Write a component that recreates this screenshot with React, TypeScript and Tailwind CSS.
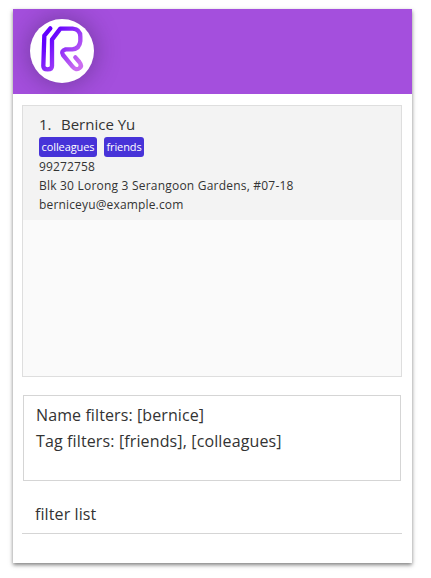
function Logo() {
  return (
    <div className="h-16 w-16 rounded-full bg-white shadow-[0_0_24px_2px_rgba(50,30,80,0.4)]">
      <svg viewBox="0 0 192 192" className="h-16 w-16" fill="none">
        <defs>
          <linearGradient id="ink" gradientUnits="userSpaceOnUse" x1="55" y1="60" x2="150" y2="130">
            <stop offset="0" stopColor="#6200ff" />
            <stop offset="1" stopColor="#cb6cf0" />
          </linearGradient>
        </defs>
        <path
          d="M61 28L43 50L40 141Q40 151 53 151Q66 151 66 141V62L91 29H128Q151 31 151 53V66Q149 89 127 91H107Q91 96 99 108L127 142Q139 156 149 147Q157 140 148 129L136 115"
          stroke="url(#ink)"
          strokeWidth="13"
          strokeLinecap="round"
          strokeLinejoin="round"
        />
      </svg>
    </div>
  );
}

function Tag({ label, className }: { label: string; className: string }) {
  return (
    <span className={`flex h-5 items-center justify-center rounded-[3px] bg-[#4733d8] pb-px text-[11px] tracking-[-0.1px] whitespace-nowrap text-white ${className}`}>
      {label}
    </span>
  );
}

export default function App() {
  return (
    <div className="h-[578px] w-[431px] bg-white pt-[9px] pl-[13px] font-['Open_Sans','Noto_Sans',sans-serif] text-[#333333]">
      <main className="flex h-[554px] w-[399px] flex-col bg-white shadow-[0_2px_4px_rgba(0,0,0,0.5)]">
        <header className="h-[85px] shrink-0 overflow-hidden bg-[#a44fdd] pt-[10px] pl-[17px]">
          <Logo />
        </header>
        <section className="mt-[11px] ml-[9px] h-[272px] w-[380px] shrink-0 border border-[#dedede] bg-[#fafafa]">
          <article className="h-[114px] bg-[#f3f3f3] pt-[7px] pl-4 text-xs leading-[19px]">
            <h1 className="mb-0.5 flex h-[22px] items-center text-[15px] whitespace-nowrap">
              <span className="w-[22px]">1.</span>
              <span>Bernice Yu</span>
            </h1>
            <div className="flex gap-[7px]">
              <Tag label="colleagues" className="w-[58px]" />
              <Tag label="friends" className="w-10" />
            </div>
            <p className="tracking-[0.15px]">99272758</p>
            <p className="tracking-[0.21px]">Blk 30 Lorong 3 Serangoon Gardens, #07-18</p>
            <p className="tracking-[0.16px]">berniceyu@example.com</p>
          </article>
        </section>
        <section className="mt-[18px] ml-[10px] h-[86px] w-[378px] shrink-0 border border-[#d5d5d5] pt-[6px] pl-3 text-base leading-[26px]">
          <p className="tracking-[0.1px]">Name filters: [bernice]</p>
          <p className="tracking-[0.13px]">Tag filters: [friends], [colleagues]</p>
        </section>
        <input
          aria-label="Command"
          defaultValue="filter list"
          className="mt-[13px] ml-[9px] h-10 w-[380px] shrink-0 border-b border-[#d5d5d5] bg-transparent pl-[13px] text-base tracking-[0.1px] outline-none"
        />
      </main>
    </div>
  );
}
